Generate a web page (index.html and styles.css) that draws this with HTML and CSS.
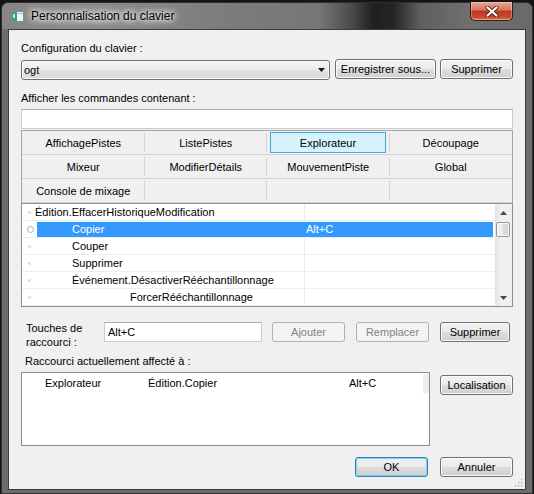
FILE: index.html
```html
<!DOCTYPE html>
<html lang="fr">
<head>
<meta charset="utf-8">
<title>Personnalisation du clavier</title>
<link rel="stylesheet" href="styles.css">
</head>
<body>
<div class="window">
  <div class="titlebar">
    <svg class="app-icon" width="13" height="11" viewBox="0 0 13 11">
      <rect x="0.5" y="0.5" width="12" height="10" fill="#eef2f6" stroke="#7b8fa3"/>
      <rect x="1" y="1" width="5" height="9" fill="#3f9c82"/>
      <rect x="2" y="3" width="2" height="4" fill="#bfe6d8"/>
      <rect x="7" y="2" width="5" height="1" fill="#a9bccd"/>
    </svg>
    <span class="title">Personnalisation du clavier</span>
    <div class="close-btn">
      <svg width="14" height="11" viewBox="0 0 14 11">
        <path d="M2.5 1.5 L11.5 9.5 M11.5 1.5 L2.5 9.5" stroke="#5a1f14" stroke-width="4" stroke-linecap="round"/>
        <path d="M2.5 1.5 L11.5 9.5 M11.5 1.5 L2.5 9.5" stroke="#ffffff" stroke-width="2.2" stroke-linecap="round"/>
      </svg>
    </div>
  </div>
  <div class="client">
    <div class="label">Configuration du clavier :</div>
    <div class="config-row">
      <div class="combo">
        <span class="combo-text">ogt</span>
        <svg class="combo-arrow" width="7" height="4" viewBox="0 0 7 4"><path d="M0 0H7L3.5 4Z" fill="#1a1a1a"/></svg>
      </div>
      <button class="btn btn-save">Enregistrer sous...</button>
      <button class="btn btn-del">Supprimer</button>
    </div>
    <div class="label label-filter">Afficher les commandes contenant :</div>
    <div class="textbox search"></div>
    <div class="tabs">
      <div class="tab-row">
        <div class="tab"><span class="tab-in">AffichagePistes</span></div>
        <div class="tab"><span class="tab-in">ListePistes</span></div>
        <div class="tab"><span class="tab-in is-active">Explorateur</span></div>
        <div class="tab"><span class="tab-in">Découpage</span></div>
      </div>
      <div class="tab-row">
        <div class="tab"><span class="tab-in">Mixeur</span></div>
        <div class="tab"><span class="tab-in">ModifierDétails</span></div>
        <div class="tab"><span class="tab-in">MouvementPiste</span></div>
        <div class="tab"><span class="tab-in">Global</span></div>
      </div>
      <div class="tab-row">
        <div class="tab"><span class="tab-in">Console de mixage</span></div>
        <div class="tab"><span class="tab-in"></span></div>
        <div class="tab"><span class="tab-in"></span></div>
        <div class="tab"><span class="tab-in"></span></div>
      </div>
    </div>
    <div class="tree">
      <div class="tree-rows">
        <div class="trow"><span class="bullet"></span><div class="tcells"><span class="tc1 lv0">Édition.EffacerHistoriqueModification</span><span class="tc2"></span></div></div>
        <div class="trow sel"><span class="bullet"></span><div class="tcells"><span class="tc1 lv1">Copier</span><span class="tc2">Alt+C</span></div></div>
        <div class="trow"><span class="bullet"></span><div class="tcells"><span class="tc1 lv1">Couper</span><span class="tc2"></span></div></div>
        <div class="trow"><span class="bullet"></span><div class="tcells"><span class="tc1 lv1">Supprimer</span><span class="tc2"></span></div></div>
        <div class="trow"><span class="bullet"></span><div class="tcells"><span class="tc1 lv1">Événement.DésactiverRééchantillonnage</span><span class="tc2"></span></div></div>
        <div class="trow"><span class="bullet"></span><div class="tcells"><span class="tc1 lv2">ForcerRééchantillonnage</span><span class="tc2"></span></div></div>
      </div>
      <div class="scrollbar">
        <div class="sb-btn"><svg width="7" height="4" viewBox="0 0 7 4"><path d="M0 4H7L3.5 0Z" fill="#4a4a4a"/></svg></div>
        <div class="sb-track"><div class="sb-thumb"></div></div>
        <div class="sb-btn"><svg width="7" height="4" viewBox="0 0 7 4"><path d="M0 0H7L3.5 4Z" fill="#4a4a4a"/></svg></div>
      </div>
    </div>
    <div class="shortcut-row">
      <div class="sc-label">Touches de<br>raccourci :</div>
      <div class="textbox sc-input">Alt+C</div>
      <button class="btn btn-disabled btn-add">Ajouter</button>
      <button class="btn btn-disabled btn-replace">Remplacer</button>
      <button class="btn btn-remove">Supprimer</button>
    </div>
    <div class="label label-assigned">Raccourci actuellement affecté à :</div>
    <div class="assigned-row">
      <div class="assigned-list">
        <div class="assigned-item">
          <span class="ai-c1">Explorateur</span>
          <span class="ai-c2">Édition.Copier</span>
          <span class="ai-c3">Alt+C</span>
        </div>
      </div>
      <button class="btn btn-locate">Localisation</button>
    </div>
    <div class="footer">
      <button class="btn btn-ok">OK</button>
      <button class="btn btn-cancel">Annuler</button>
    </div>
    <svg class="grip" width="9" height="9" viewBox="0 0 9 9">
      <rect x="7" y="1" width="1.5" height="1.5" fill="#b8b8b8"/>
      <rect x="4" y="4" width="1.5" height="1.5" fill="#b8b8b8"/>
      <rect x="7" y="4" width="1.5" height="1.5" fill="#b8b8b8"/>
      <rect x="1" y="7" width="1.5" height="1.5" fill="#b8b8b8"/>
      <rect x="4" y="7" width="1.5" height="1.5" fill="#b8b8b8"/>
      <rect x="7" y="7" width="1.5" height="1.5" fill="#b8b8b8"/>
    </svg>
  </div>
</div>
</body>
</html>
```
FILE: styles.css
```css
* { box-sizing: border-box; }
html, body { margin: 0; padding: 0; }
body {
  width: 534px;
  height: 494px;
  overflow: hidden;
  background: #151515;
  font-family: "Liberation Sans", Arial, sans-serif;
  font-size: 11px;
  line-height: 16px;
  color: #000;
}
.window {
  margin: 2px 1px 0;
  height: 492px;
  border: 1px solid #2f2f2f;
  border-radius: 7px 7px 0 0;
  background: #6d6d6d;
  padding: 0 6px 3px;
  display: flex;
  flex-direction: column;
}
.titlebar {
  height: 26px;
  margin: 0 -6px;
  padding-left: 9px;
  display: flex;
  align-items: center;
  border-radius: 6px 6px 0 0;
  background: linear-gradient(to right, #858585 0%, #8c8c8c 18%, #7d7d7d 40%, #767676 60%, #4a4a4a 66%, #1f1f1f 70%, #262626 74%, #5f5f5f 79%, #6f6f6f 88%, #6a6a6a 100%);
}
.app-icon { flex: none; }
.title {
  margin-left: 7px;
  font-size: 12px;
  color: #000;
  text-shadow: 0 0 8px #fff, 0 0 8px #fff, 0 0 4px #eee;
}
.close-btn {
  margin-left: auto;
  margin-right: 19px;
  align-self: flex-start;
  margin-top: -1px;
  width: 43px;
  height: 19px;
  border: 1px solid #3b1a14;
  border-top: none;
  border-radius: 0 0 5px 5px;
  background: linear-gradient(#e6a797 0%, #d67a63 42%, #bd3a22 52%, #c84a2e 85%, #e0805e 100%);
  box-shadow: inset 0 0 0 1px rgba(255, 255, 255, 0.3);
  display: flex;
  align-items: center;
  justify-content: center;
}
.client {
  flex: 1;
  position: relative;
  background: #f0f0f0;
  border: 1px solid #3c3c3c;
  padding: 10px 12px 0 12px;
  display: flex;
  flex-direction: column;
}
.label { height: 16px; white-space: nowrap; }
.config-row { display: flex; height: 21px; margin-top: 3px; }
.combo {
  width: 309px;
  height: 20px;
  margin-top: 1px;
  border: 1px solid #707070;
  border-radius: 3px;
  background: linear-gradient(#f4f4f4 0%, #ececec 50%, #e2e2e2 51%, #dadada 100%);
  box-shadow: inset 0 0 0 1px #fafafa;
  display: flex;
  align-items: center;
  padding-left: 2px;
}
.combo-text { flex: 1; }
.combo-arrow { margin-right: 4px; }
.btn {
  height: 20px;
  padding: 0;
  border: 1px solid #707070;
  border-radius: 3px;
  background: linear-gradient(#f2f2f2 0%, #ebebeb 48%, #dddddd 52%, #cfcfcf 100%);
  box-shadow: inset 0 0 0 1px #fbfbfb;
  font-family: inherit;
  font-size: 11px;
  line-height: 16px;
  color: #000;
  text-align: center;
  white-space: nowrap;
}
.btn-save { width: 101px; margin-left: 5px; }
.btn-del { width: 73px; margin-left: 4px; }
.label-filter { margin-top: 10px; }
.textbox {
  background: #fff;
  border: 1px solid #c8cbd0;
  border-top-color: #abadb3;
}
.search { height: 20px; margin-top: 3px; }
.tabs {
  margin-top: 1px;
  border: 1px solid #a5a5a5;
  border-bottom: none;
}
.tab-row {
  display: grid;
  grid-template-columns: repeat(4, 1fr);
  height: 24px;
  border-bottom: 1px solid #d2d2d2;
}
.tab {
  display: flex;
  padding: 1px 0;
  background: linear-gradient(#d4d4d4, #d4d4d4) right 0 top 2px / 1px 19px no-repeat;
}
.tab:last-child { background: none; }
.tab-in {
  flex: 1;
  display: flex;
  align-items: center;
  justify-content: center;
  margin: 0 3px;
  border: 1px solid transparent;
  white-space: nowrap;
}
.tab-in.is-active {
  background: #d5f3fd;
  border-color: #4ea3d8;
  margin-right: 3.5px;
}
.tree {
  height: 104px;
  border: 1px solid #8e8f8f;
  display: flex;
  background: #fff;
}
.tree-rows { flex: 1; overflow: hidden; }
.trow {
  display: flex;
  height: 17px;
  border-bottom: 1px solid #ededed;
}
.bullet {
  width: 15px;
  flex: none;
  display: flex;
  align-items: center;
  padding-left: 6px;
}
.bullet::before {
  content: "";
  width: 3px;
  height: 3px;
  border-radius: 50%;
  background: #dadada;
}
.trow.sel .bullet::before {
  width: 5px;
  height: 5px;
  margin-left: -1px;
  background: #fff;
  border: 1px solid #8fb0c8;
}
.tcells {
  flex: 1;
  display: grid;
  grid-template-columns: 268px 1fr;
}
.tc1 { border-right: 1px solid #ededed; white-space: nowrap; }
.tc2 { padding-left: 1px; white-space: nowrap; }
.lv0 { margin-left: -2px; }
.lv1 { padding-left: 35px; }
.lv2 { padding-left: 93px; }
.trow.sel .tcells {
  background: #3399ff;
  color: #fff;
  margin: 1px 2px 0 0;
  line-height: 15px;
}
.trow.sel .tc1 { border-right-color: transparent; }
.scrollbar {
  width: 17px;
  flex: none;
  display: flex;
  flex-direction: column;
  background: linear-gradient(to right, #e3e3e3, #f1f1f1 40%, #efefef);
}
.sb-btn {
  height: 17px;
  display: flex;
  align-items: center;
  justify-content: center;
}
.sb-track { flex: 1; padding: 1px 2px 0 1px; }
.sb-thumb {
  height: 15px;
  border: 1px solid #959595;
  border-radius: 2px;
  background: linear-gradient(to right, #f4f4f4, #eaeaea 50%, #dcdcdc 51%, #d2d2d2);
  box-shadow: inset 0 0 0 1px #fafafa;
}
.shortcut-row {
  display: flex;
  align-items: flex-start;
  height: 27px;
  margin-top: 15px;
}
.sc-label {
  width: 83px;
  padding-left: 5px;
  line-height: 14px;
  margin-top: -1px;
}
.sc-input {
  width: 158px;
  height: 20px;
  padding-left: 3px;
  line-height: 18px;
}
.btn-disabled {
  border-color: #adb2b5;
  background: #f4f4f4;
  box-shadow: none;
  color: #838383;
}
.btn-add { width: 73px; margin-left: 10px; }
.btn-replace { width: 73px; margin-left: 11px; }
.btn-remove { width: 70px; margin-left: 11px; }
.label-assigned { margin-top: 4px; padding-left: 4px; }
.assigned-row { display: flex; margin-top: 3px; height: 74px; }
.assigned-list {
  width: 409px;
  height: 74px;
  border: 1px solid #8c8c8c;
  background: #fff;
  padding-top: 1px;
}
.assigned-item {
  display: flex;
  height: 19px;
  line-height: 19px;
  padding-left: 23px;
  border-right: 6px solid #eeeeee;
  white-space: nowrap;
}
.ai-c1 { width: 103px; }
.ai-c2 { width: 201px; }
.btn-locate { width: 73px; margin-left: 10px; margin-top: 3px; }
.footer {
  display: flex;
  justify-content: flex-end;
  gap: 12px;
  margin-top: 11px;
}
.footer .btn { width: 73px; }
.btn-ok {
  border-color: #3c7fb1;
  box-shadow: inset 0 0 0 1px #7fd3f2, inset 0 0 3px #a6e1f7;
}
.grip { position: absolute; right: 2px; bottom: 2px; }
```
